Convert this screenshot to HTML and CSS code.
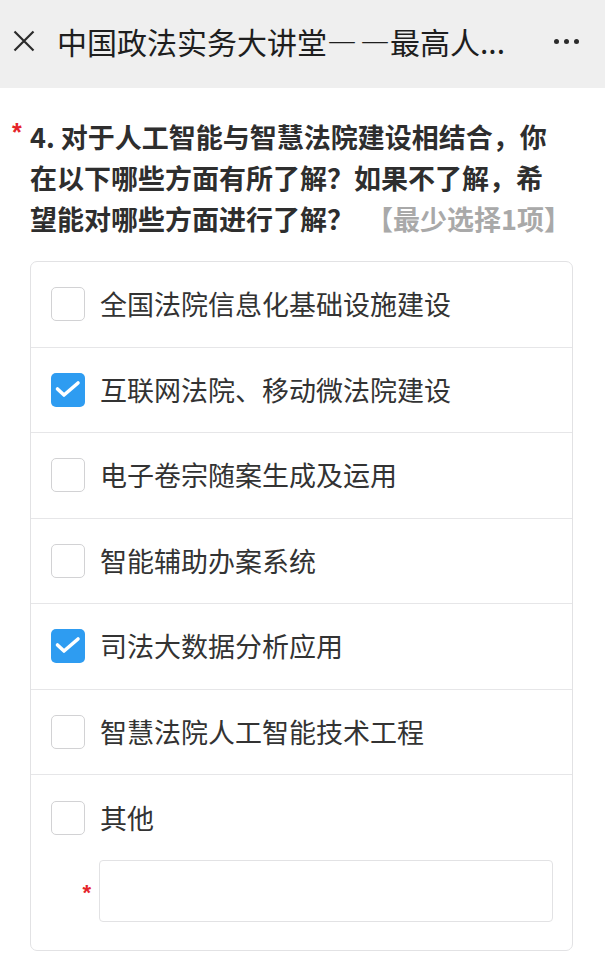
FILE: index.html
```html
<!DOCTYPE html>
<html lang="zh-CN">
<head>
<meta charset="utf-8">
<title>中国政法实务大讲堂</title>
<link rel="stylesheet" href="styles.css">
</head>
<body>
<header class="topbar">
  <svg class="close-icon" width="22" height="22" viewBox="0 0 22 22"><path d="M1.5 1.5 L20.5 20.5 M20.5 1.5 L1.5 20.5" stroke="#2b2b2b" stroke-width="2.2" fill="none"/></svg>
  <div class="title">中国政法实务大讲堂<span class="dash">—</span>—最高人...</div>
  <div class="more"><span></span><span></span><span></span></div>
</header>

<main class="content">
  <div class="question">
    <span class="req">*</span>
    <p class="q-text">4. 对于人工智能与智慧法院建设相结合，你在以下哪些方面有所了解？如果不了解，希望能对哪些方面进行了解？<span class="hint">【最少选择1项】</span></p>
  </div>

  <div class="card">
    <div class="row"><span class="box"></span><span class="label">全国法院信息化基础设施建设</span></div>
    <div class="row"><span class="box checked"><svg viewBox="0 0 34 34" width="34" height="34"><polyline points="6.5,16 13,22 27,10" fill="none" stroke="#fff" stroke-width="3.6" stroke-linecap="round" stroke-linejoin="round"/></svg></span><span class="label">互联网法院、移动微法院建设</span></div>
    <div class="row"><span class="box"></span><span class="label">电子卷宗随案生成及运用</span></div>
    <div class="row"><span class="box"></span><span class="label">智能辅助办案系统</span></div>
    <div class="row"><span class="box checked"><svg viewBox="0 0 34 34" width="34" height="34"><polyline points="6.5,16 13,22 27,10" fill="none" stroke="#fff" stroke-width="3.6" stroke-linecap="round" stroke-linejoin="round"/></svg></span><span class="label">司法大数据分析应用</span></div>
    <div class="row"><span class="box"></span><span class="label">智慧法院人工智能技术工程</span></div>
    <div class="row row-other">
      <div class="other-line"><span class="box"></span><span class="label">其他</span></div>
      <div class="input-line"><span class="req-small">*</span><div class="text-input"></div></div>
    </div>
  </div>
</main>
</body>
</html>
```

FILE: styles.css
```css
* { box-sizing: border-box; }

html, body {
  margin: 0;
  padding: 0;
  background: #ffffff;
  font-family: "Noto Sans CJK SC", "Noto Sans", sans-serif;
  color: #333333;
}

.topbar {
  height: 88px;
  background: #efefef;
  display: flex;
  align-items: center;
  padding: 0 0 6px 13px;
}

.close-icon {
  flex: none;
  display: block;
}

.title {
  margin-left: 22px;
  font-size: 30px;
  line-height: 40px;
  font-weight: 400;
  color: #1e1e1e;
  white-space: nowrap;
  flex: 1;
}

.dash {
  letter-spacing: 3px;
}

.more {
  display: flex;
  gap: 5px;
  margin-right: 26px;
  align-items: center;
}

.more span {
  width: 5px;
  height: 5px;
  border-radius: 50%;
  background: #2b2b2b;
}

.content {
  padding: 0 33px 0 30px;
}

.question {
  position: relative;
  margin-top: 28px;
  width: 536px;
}

.req {
  position: absolute;
  left: -18px;
  top: 1px;
  color: #e5242a;
  font-family: "Liberation Sans", sans-serif;
  font-size: 25px;
  font-weight: 700;
  line-height: 30px;
}

.q-text {
  margin: 0;
  font-size: 27px;
  line-height: 41px;
  font-weight: 700;
  color: #2e2e2e;
}

.hint {
  margin-left: 12px;
  margin-right: -40px;
  white-space: nowrap;
  color: #a9a9a9;
  font-weight: 700;
}

.card {
  margin-top: 22px;
  width: 543px;
  border: 1px solid #e2e2e4;
  border-radius: 7px;
}

.row {
  height: 85.5px;
  padding: 0 20px;
  display: flex;
  align-items: center;
  border-bottom: 1px solid #e6e6e8;
}

.row:last-child {
  border-bottom: none;
}

.box {
  flex: none;
  width: 34px;
  height: 34px;
  border: 1.5px solid #d2d2d4;
  border-radius: 5px;
  background: #ffffff;
  display: block;
}

.box.checked {
  border: none;
  background: #2e9cf1;
}

.box svg {
  display: block;
}

.label {
  margin-left: 15px;
  font-size: 27px;
  line-height: 36px;
  color: #333333;
}

.row-other {
  height: auto;
  display: block;
  padding: 25px 19px 28px 20px;
}

.other-line {
  display: flex;
  align-items: center;
}

.input-line {
  margin-top: 24px;
  display: flex;
  align-items: center;
}

.req-small {
  width: 48px;
  padding-right: 8px;
  text-align: right;
  color: #e5242a;
  font-family: "Liberation Sans", sans-serif;
  font-size: 22px;
  font-weight: 700;
  line-height: 22px;
  margin-top: 4px;
}

.text-input {
  flex: 1;
  height: 62px;
  border: 1.5px solid #e2e2e4;
  border-radius: 4px;
  background: #ffffff;
}
```
